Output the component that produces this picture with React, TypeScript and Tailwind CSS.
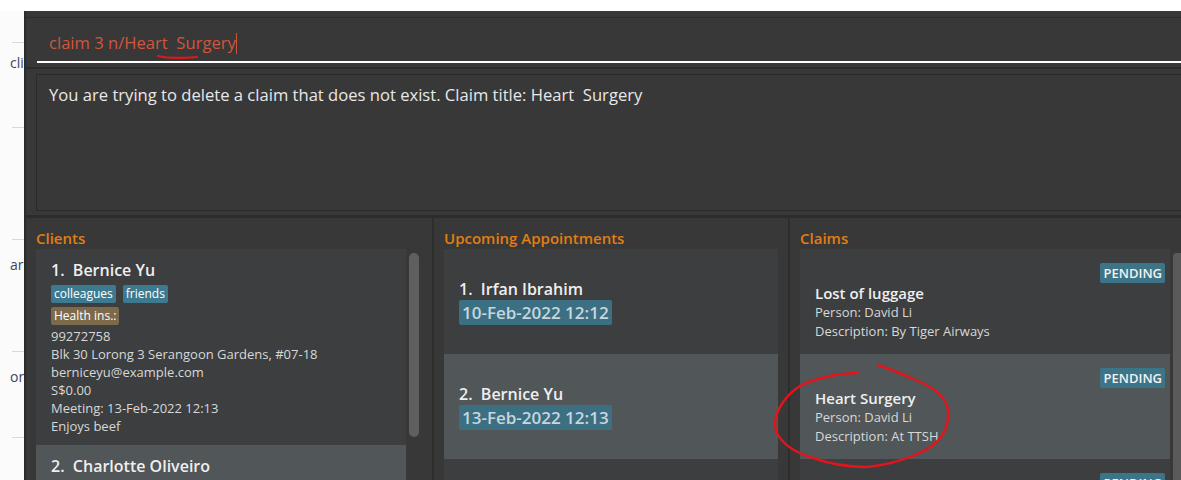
const clients = [
  {
    name: "1.  Bernice Yu",
    tags: ["colleagues", "friends"],
    lines: [
      "99272758",
      "Blk 30 Lorong 3 Serangoon Gardens, #07-18",
      "berniceyu@example.com",
      "S$0.00",
      "Meeting: 13-Feb-2022 12:13",
      "Enjoys beef",
    ],
  },
]

const appointments = [
  { name: "1.  Irfan Ibrahim", date: "10-Feb-2022 12:12" },
  { name: "2.  Bernice Yu", date: "13-Feb-2022 12:13" },
]

const claims = [
  { title: "Lost of luggage", person: "David Li", desc: "By Tiger Airways" },
  { title: "Heart Surgery", person: "David Li", desc: "At TTSH" },
]

const App = () => {
  return (
    <div className="relative w-[1181px] h-[480px] overflow-hidden bg-white font-['Open_Sans',sans-serif]">
      <div className="h-[11px] bg-white" />
      <div className="flex h-[469px]">
        {/* window behind */}
        <div className="w-[24px] shrink-0 overflow-hidden bg-[#fbfbfb] text-[14px] text-[#3b4660]">
          <div className="mt-[31px] ml-[12px] h-px bg-[#d9d9d9]" />
          <div className="mt-[10px] pl-[10px] whitespace-nowrap leading-[20px]">cli</div>
          <div className="mt-[54px] ml-[12px] h-px bg-[#d9d9d9]" />
          <div className="mt-[111px] ml-[12px] h-px bg-[#d9d9d9]" />
          <div className="mt-[15px] pl-[10px] whitespace-nowrap leading-[20px]">ar</div>
          <div className="mt-[76px] ml-[12px] h-px bg-[#d9d9d9]" />
          <div className="mt-[15px] pl-[10px] whitespace-nowrap leading-[20px]">or</div>
          <div className="mt-[50px] ml-[12px] h-px bg-[#d9d9d9]" />
        </div>

        {/* app window */}
        <div className="flex-1 flex flex-col bg-[#383838] border-l-2 border-[#2b2b2b]">
          <div className="h-[6px]" />
          <div className="h-px bg-[#2c2c2c]" />
          <div className="h-[43px] pl-[23px] pt-[14px] flex items-start">
            <span className="text-[16.6px] leading-[22px] text-[#d1563e] whitespace-pre">claim 3 n/Heart  Surgery</span>
            <span className="mt-[1px] w-px h-[21px] bg-[#c9553f]" />
          </div>
          <div className="ml-[11px] h-[2px] bg-white" />
          <div className="h-[4px]" />
          <div className="h-[2px] bg-[#2c2c2c]" />
          <div className="h-[5px]" />

          {/* result box */}
          <div className="ml-[10px] h-[137px] border border-[#2a2a2a] border-r-0 pl-[12px] pt-[8px]">
            <div className="text-[16.6px] leading-[24px] text-[#e8e8e8] whitespace-pre">
              You are trying to delete a claim that does not exist. Claim title: Heart  Surgery
            </div>
          </div>
          <div className="h-[4px]" />
          <div className="h-[3px] bg-[#2c2c2c]" />

          {/* panes */}
          <div className="flex-1 flex min-h-0">
            {/* clients */}
            <div className="w-[406px] shrink-0 flex flex-col pl-[10px] pr-[13px]">
              <div className="h-[31px] pt-[10px] text-[15px] leading-[20px] font-semibold text-[#e27e12]">Clients</div>
              <div className="flex-1 flex gap-[3px] min-h-0">
                <div className="flex-1 flex flex-col overflow-hidden">
                  {clients.map((c) => (
                    <div key={c.name} className="h-[196px] shrink-0 bg-[#3c3e3f] pl-[15px] pt-[10px]">
                      <div className="text-[16px] leading-[22px] font-semibold text-[#efefef] whitespace-pre">{c.name}</div>
                      <div className="mt-[4px] flex gap-[7px]">
                        {c.tags.map((t) => (
                          <span key={t} className="h-[18px] px-[3px] rounded-[2px] bg-[#3e7a8f] text-[12px] leading-[18px] text-white">{t}</span>
                        ))}
                      </div>
                      <div className="mt-[4px] flex">
                        <span className="h-[18px] px-[3px] rounded-[2px] bg-[#7d6a4b] text-[12px] leading-[18px] text-white">Health ins.:</span>
                      </div>
                      <div className="mt-[2px] text-[13px] leading-[18px] text-[#d8d8d8]">
                        {c.lines.map((l) => (
                          <div key={l}>{l}</div>
                        ))}
                      </div>
                    </div>
                  ))}
                  <div className="flex-1 bg-[#515658] pl-[15px] pt-[10px]">
                    <div className="text-[16px] leading-[22px] font-semibold text-[#efefef] whitespace-pre">2.  Charlotte Oliveiro</div>
                  </div>
                </div>
                <div className="w-[10px] pt-[4px]">
                  <div className="h-[184px] rounded-[5px] bg-[#5f5f5f]" />
                </div>
              </div>
            </div>

            <div className="w-[2px] bg-[#2e2e2e]" />

            {/* appointments */}
            <div className="w-[354px] shrink-0 flex flex-col pl-[10px] pr-[10px]">
              <div className="h-[31px] pt-[10px] text-[15px] leading-[20px] font-semibold text-[#e27e12]">Upcoming Appointments</div>
              <div className="flex-1 flex flex-col overflow-hidden">
                {appointments.map((a, i) => (
                  <div key={a.name} className={`h-[105px] shrink-0 pl-[15px] pt-[29px] ${i % 2 === 0 ? "bg-[#3c3e3f]" : "bg-[#515658]"}`}>
                    <div className="text-[16px] leading-[22px] font-semibold text-[#efefef] whitespace-pre">{a.name}</div>
                    <div className="flex">
                      <span className="h-[25px] px-[3px] rounded-[2px] bg-[#3d6f83] text-[17px] leading-[25px] font-semibold text-[#c6d7de]">{a.date}</span>
                    </div>
                  </div>
                ))}
                <div className="flex-1 bg-[#3c3e3f]" />
              </div>
            </div>

            <div className="w-[2px] bg-[#2e2e2e]" />

            {/* claims */}
            <div className="flex-1 flex flex-col pl-[10px]">
              <div className="h-[31px] pt-[10px] text-[15px] leading-[20px] font-semibold text-[#e27e12]">Claims</div>
              <div className="flex-1 flex gap-[3px] min-h-0">
                <div className="flex-1 flex flex-col overflow-hidden">
                  {claims.map((c, i) => (
                    <div key={c.title} className={`h-[105px] shrink-0 pl-[15px] pr-[5px] pt-[14px] ${i % 2 === 0 ? "bg-[#3c3e3f]" : "bg-[#515658]"}`}>
                      <div className="flex justify-end">
                        <span className="h-[20px] px-[3px] rounded-[2px] bg-[#3d7588] text-[13px] leading-[20px] font-semibold text-[#f2f2f2]">PENDING</span>
                      </div>
                      <div className="text-[15px] leading-[20px] font-semibold text-[#efefef]">{c.title}</div>
                      <div className="text-[13px] leading-[19px] text-[#d8d8d8]">Person: {c.person}</div>
                      <div className="text-[13px] leading-[18px] text-[#d8d8d8]">Description: {c.desc}</div>
                    </div>
                  ))}
                  <div className="flex-1 bg-[#3c3e3f] pr-[5px] pt-[14px] flex justify-end items-start">
                    <span className="h-[20px] px-[3px] rounded-[2px] bg-[#3d7588] text-[13px] leading-[20px] font-semibold text-[#f2f2f2]">PENDING</span>
                  </div>
                </div>
                <div className="w-[8px] pt-[4px]">
                  <div className="h-full rounded-tl-[4px] bg-[#5a5a5a]" />
                </div>
              </div>
            </div>
          </div>
        </div>
      </div>

      {/* red pen annotations */}
      <svg className="absolute left-0 top-0 pointer-events-none" width="1181" height="480" viewBox="0 0 1181 480">
        <path d="M158 56 C170 59 185 58 197 57" fill="none" stroke="#e3141c" strokeWidth="2.2" strokeLinecap="round" />
        <path
          d="M858 373 C840 373 815 378 800 386 C786 395 775 410 775 425 C776 440 792 452 813 458 C830 464 850 467 866 467 C890 465 915 457 932 446 C945 436 949 423 948 410 C946 397 935 388 918 381 C905 375 890 369 878 365"
          fill="none"
          stroke="#e3141c"
          strokeWidth="2.4"
          strokeLinecap="round"
        />
      </svg>
    </div>
  )
}

export default App
